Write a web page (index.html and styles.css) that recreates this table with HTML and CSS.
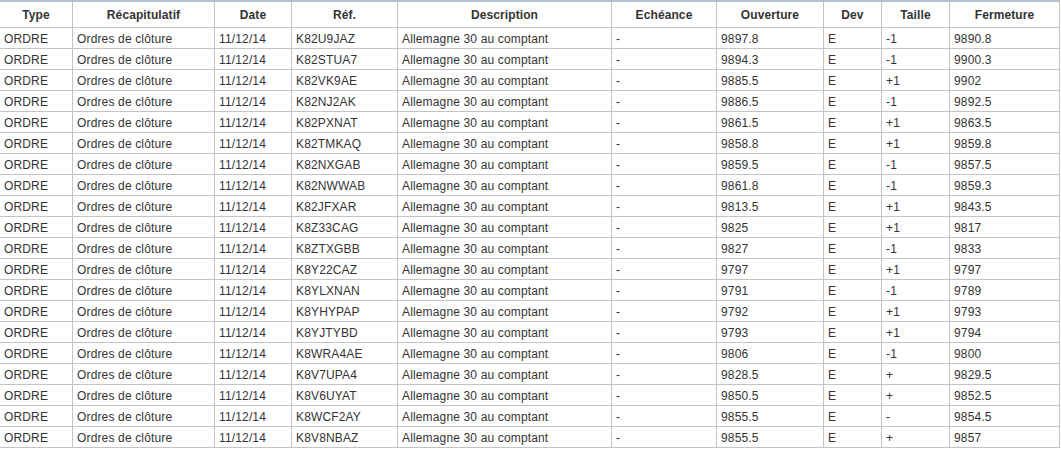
FILE: index.html
```html
<!DOCTYPE html>
<html lang="fr">
<head>
<meta charset="utf-8">
<title>Ordres</title>
<link rel="stylesheet" href="styles.css">
</head>
<body>
<table class="orders">
<colgroup>
<col class="c-type"><col class="c-recap"><col class="c-date"><col class="c-ref"><col class="c-desc"><col class="c-ech"><col class="c-open"><col class="c-dev"><col class="c-size"><col class="c-close">
</colgroup>
<thead>
<tr><th>Type</th><th>Récapitulatif</th><th>Date</th><th>Réf.</th><th>Description</th><th>Echéance</th><th>Ouverture</th><th>Dev</th><th>Taille</th><th>Fermeture</th></tr>
</thead>
<tbody>
<tr><td>ORDRE</td><td>Ordres de clôture</td><td>11/12/14</td><td>K82U9JAZ</td><td>Allemagne 30 au comptant</td><td>-</td><td>9897.8</td><td>E</td><td>-1</td><td>9890.8</td></tr>
<tr><td>ORDRE</td><td>Ordres de clôture</td><td>11/12/14</td><td>K82STUA7</td><td>Allemagne 30 au comptant</td><td>-</td><td>9894.3</td><td>E</td><td>-1</td><td>9900.3</td></tr>
<tr><td>ORDRE</td><td>Ordres de clôture</td><td>11/12/14</td><td>K82VK9AE</td><td>Allemagne 30 au comptant</td><td>-</td><td>9885.5</td><td>E</td><td>+1</td><td>9902</td></tr>
<tr><td>ORDRE</td><td>Ordres de clôture</td><td>11/12/14</td><td>K82NJ2AK</td><td>Allemagne 30 au comptant</td><td>-</td><td>9886.5</td><td>E</td><td>-1</td><td>9892.5</td></tr>
<tr><td>ORDRE</td><td>Ordres de clôture</td><td>11/12/14</td><td>K82PXNAT</td><td>Allemagne 30 au comptant</td><td>-</td><td>9861.5</td><td>E</td><td>+1</td><td>9863.5</td></tr>
<tr><td>ORDRE</td><td>Ordres de clôture</td><td>11/12/14</td><td>K82TMKAQ</td><td>Allemagne 30 au comptant</td><td>-</td><td>9858.8</td><td>E</td><td>+1</td><td>9859.8</td></tr>
<tr><td>ORDRE</td><td>Ordres de clôture</td><td>11/12/14</td><td>K82NXGAB</td><td>Allemagne 30 au comptant</td><td>-</td><td>9859.5</td><td>E</td><td>-1</td><td>9857.5</td></tr>
<tr><td>ORDRE</td><td>Ordres de clôture</td><td>11/12/14</td><td>K82NWWAB</td><td>Allemagne 30 au comptant</td><td>-</td><td>9861.8</td><td>E</td><td>-1</td><td>9859.3</td></tr>
<tr><td>ORDRE</td><td>Ordres de clôture</td><td>11/12/14</td><td>K82JFXAR</td><td>Allemagne 30 au comptant</td><td>-</td><td>9813.5</td><td>E</td><td>+1</td><td>9843.5</td></tr>
<tr><td>ORDRE</td><td>Ordres de clôture</td><td>11/12/14</td><td>K8Z33CAG</td><td>Allemagne 30 au comptant</td><td>-</td><td>9825</td><td>E</td><td>+1</td><td>9817</td></tr>
<tr><td>ORDRE</td><td>Ordres de clôture</td><td>11/12/14</td><td>K8ZTXGBB</td><td>Allemagne 30 au comptant</td><td>-</td><td>9827</td><td>E</td><td>-1</td><td>9833</td></tr>
<tr><td>ORDRE</td><td>Ordres de clôture</td><td>11/12/14</td><td>K8Y22CAZ</td><td>Allemagne 30 au comptant</td><td>-</td><td>9797</td><td>E</td><td>+1</td><td>9797</td></tr>
<tr><td>ORDRE</td><td>Ordres de clôture</td><td>11/12/14</td><td>K8YLXNAN</td><td>Allemagne 30 au comptant</td><td>-</td><td>9791</td><td>E</td><td>-1</td><td>9789</td></tr>
<tr><td>ORDRE</td><td>Ordres de clôture</td><td>11/12/14</td><td>K8YHYPAP</td><td>Allemagne 30 au comptant</td><td>-</td><td>9792</td><td>E</td><td>+1</td><td>9793</td></tr>
<tr><td>ORDRE</td><td>Ordres de clôture</td><td>11/12/14</td><td>K8YJTYBD</td><td>Allemagne 30 au comptant</td><td>-</td><td>9793</td><td>E</td><td>+1</td><td>9794</td></tr>
<tr><td>ORDRE</td><td>Ordres de clôture</td><td>11/12/14</td><td>K8WRA4AE</td><td>Allemagne 30 au comptant</td><td>-</td><td>9806</td><td>E</td><td>-1</td><td>9800</td></tr>
<tr><td>ORDRE</td><td>Ordres de clôture</td><td>11/12/14</td><td>K8V7UPA4</td><td>Allemagne 30 au comptant</td><td>-</td><td>9828.5</td><td>E</td><td>+</td><td>9829.5</td></tr>
<tr><td>ORDRE</td><td>Ordres de clôture</td><td>11/12/14</td><td>K8V6UYAT</td><td>Allemagne 30 au comptant</td><td>-</td><td>9850.5</td><td>E</td><td>+</td><td>9852.5</td></tr>
<tr><td>ORDRE</td><td>Ordres de clôture</td><td>11/12/14</td><td>K8WCF2AY</td><td>Allemagne 30 au comptant</td><td>-</td><td>9855.5</td><td>E</td><td>-</td><td>9854.5</td></tr>
<tr><td>ORDRE</td><td>Ordres de clôture</td><td>11/12/14</td><td>K8V8NBAZ</td><td>Allemagne 30 au comptant</td><td>-</td><td>9855.5</td><td>E</td><td>+</td><td>9857</td></tr>
</tbody>
</table>
</body>
</html>
```

FILE: styles.css
```css
html, body {
  margin: 0;
  padding: 0;
  background: #ffffff;
}

.orders {
  border-collapse: separate;
  border-spacing: 0;
  table-layout: fixed;
  width: 1060px;
  font-family: "Liberation Sans", Arial, sans-serif;
  font-size: 12px;
  color: #333333;
  border-top: 2px solid #b3bfcf;
}

.c-type { width: 73px; }
.c-recap { width: 142px; }
.c-date { width: 77px; }
.c-ref { width: 106px; }
.c-desc { width: 214px; }
.c-ech { width: 105px; }
.c-open { width: 107px; }
.c-dev { width: 58px; }
.c-size { width: 68px; }
.c-close { width: 110px; }

.orders th,
.orders td {
  border-right: 1px solid #c4c4c4;
  border-bottom: 1px solid #c4c4c4;
  white-space: nowrap;
  overflow: hidden;
}

.orders th {
  height: 25px;
  padding: 0 4px;
  font-weight: bold;
  text-align: center;
  color: #333333;
  letter-spacing: 0.1px;
}

.orders td {
  height: 19px;
  padding: 1px 4px 0 4px;
  text-align: left;
  letter-spacing: 0.15px;
}
```
